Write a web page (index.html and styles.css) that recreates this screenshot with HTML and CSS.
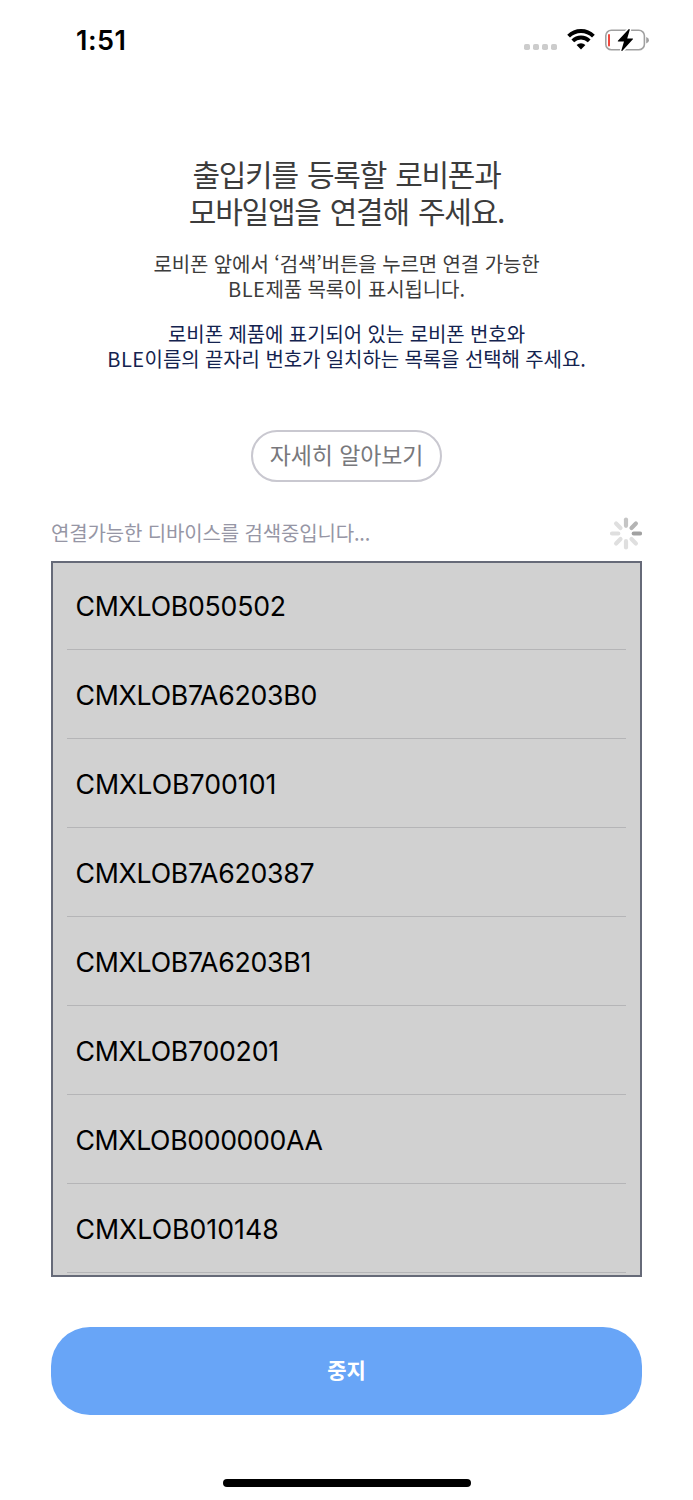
FILE: index.html
```html
<!DOCTYPE html>
<html lang="ko">
<head>
<meta charset="utf-8">
<title>로비폰 연결</title>
<link rel="stylesheet" href="styles.css">
</head>
<body>
<div class="screen">
  <header class="status">
    <span class="time">1:51</span>
    <div class="indicators">
      <div class="signal"><i></i><i></i><i></i><i></i></div>
      <svg class="wifi" width="28" height="21" viewBox="0 0 28 21" fill="none" stroke="#000" stroke-width="3.9">
        <path d="M1.6 7.1 A17.6 17.6 0 0 1 26.4 7.1"/>
        <path d="M5.8 11.9 A11.6 11.6 0 0 1 22.2 11.9"/>
        <path d="M14 20.4 L9.6 16 A6.4 6.4 0 0 1 18.4 16 Z" fill="#000" stroke="none"/>
      </svg>
      <svg class="battery" width="46" height="24" viewBox="0 0 46 24">
        <rect x="1.8" y="2.2" width="38.6" height="19.6" rx="5.6" fill="none" stroke="#a0a0a0" stroke-width="1.6"/>
        <path d="M42.2 8.9 Q45 9.8 45 12.2 Q45 14.6 42.2 15.5 Z" fill="#a0a0a0"/>
        <rect x="4" y="6" width="2" height="12.6" rx="1" fill="#f0483e"/>
        <path d="M24.6 1.2 L13.9 12.8 Q13.4 13.6 14.2 13.6 H20 L17.4 22.2 Q17.3 23.6 18.4 22.8 L28.9 11.3 Q29.4 10.4 28.5 10.4 H23.2 L25.7 2 Q25.8 .6 24.6 1.2 Z" fill="#000" stroke="#fff" stroke-width="3" paint-order="stroke"/>
      </svg>
    </div>
  </header>

  <main class="content">
    <h1 class="title">출입키를 등록할 로비폰과<br>모바일앱을 연결해 주세요.</h1>
    <p class="guide">로비폰 앞에서 ‘검색’버튼을 누르면 연결 가능한<br><span class="latin">BLE</span>제품 목록이 표시됩니다.</p>
    <p class="guide notice">로비폰 제품에 표기되어 있는 로비폰 번호와<br><span class="latin">BLE</span>이름의 끝자리 번호가 일치하는 목록을 선택해 주세요.</p>
    <button class="more"><span>자세히 알아보기</span></button>

    <div class="searching">
      <span class="search-text">연결가능한 디바이스를 검색중입니다...</span>
      <svg class="spinner" width="34" height="34" viewBox="-18 -16.5 34 34" stroke-width="4.2" stroke-linecap="round">
        <path d="M0 -7.7V-14" stroke="#c5c5c5"/>
        <path d="M5.5 -5.5L9.9 -9.9" stroke="#b4b4b4"/>
        <path d="M7.7 0H14" stroke="#a1a1a1"/>
        <path d="M5.5 5.5L9.9 9.9M0 7.7V14M-5.5 5.5L-9.9 9.9M-7.7 0H-14M-5.5 -5.5L-9.9 -9.9" stroke="#dfdfdf"/>
      </svg>
    </div>

    <ul class="devices">
      <li>CMXLOB050502</li>
      <li>CMXLOB7A6203B0</li>
      <li class="loose">CMXLOB700101</li>
      <li>CMXLOB7A620387</li>
      <li>CMXLOB7A6203B1</li>
      <li>CMXLOB700201</li>
      <li class="tight">CMXLOB000000AA</li>
      <li class="loose">CMXLOB010148</li>
    </ul>
    <button class="stop"><span>중지</span></button>
  </main>
  <div class="home-bar"></div>
</div>
</body>
</html>
```
FILE: styles.css
```css
* { box-sizing: border-box; }
body { margin: 0; background: #fff; }
.screen {
  width: 693px;
  height: 1500px;
  display: flex;
  flex-direction: column;
  align-items: center;
  overflow: hidden;
  font-family: Inter, "Noto Sans CJK KR", sans-serif;
}
.status {
  width: 100%;
  height: 80px;
  padding: 0 43.5px 1px 76px;
  display: flex;
  align-items: center;
  justify-content: space-between;
}
.time { padding-top: 1px; font-size: 27px; font-weight: 600; letter-spacing: .5px; }
.indicators { display: flex; align-items: center; }
.signal { display: flex; gap: 2.8px; padding-top: 14px; margin-right: 10px; }
.signal i { width: 6px; height: 6px; border-radius: 1.8px; background: #ccc; }
.wifi { margin-right: 9px; }

.content {
  width: 591px;
  display: flex;
  flex-direction: column;
  align-items: center;
}
.title, .guide {
  margin: 0;
  text-align: center;
  white-space: nowrap;
  font-family: "Noto Sans CJK KR", sans-serif;
  font-weight: 400;
  color: #3c3c3c;
}
.title { margin-top: 75px; font-size: 30px; line-height: 37px; letter-spacing: -1.25px; word-spacing: 2px; }
.guide { margin-top: 22px; font-size: 20px; line-height: 25px; letter-spacing: -.1px; }
.notice { margin-top: 20px; color: #14234f; }
.latin { letter-spacing: .5px; }
.more {
  width: 191px;
  height: 52px;
  margin-top: 59px;
  padding: 0 0 4px;
  border: 2px solid #c9c8d0;
  border-radius: 26px;
  background: #fff;
  color: #78787c;
  font: 400 23px "Noto Sans CJK KR", sans-serif;
  letter-spacing: -.15px;
}
.searching {
  width: 100%;
  height: 34px;
  margin-top: 35px;
  display: flex;
  align-items: center;
  justify-content: space-between;
}
.search-text {
  padding-bottom: 2px;
  font: 400 20px/32px "Noto Sans CJK KR", sans-serif;
  letter-spacing: -.15px;
  color: #9696a5;
}
.devices {
  width: 100%;
  height: 716px;
  margin: 10px 0 0;
  padding: 0 14px;
  border: 2px solid #666a78;
  background: #d1d1d1;
  list-style: none;
  overflow: hidden;
}
.devices li {
  height: 89px;
  padding-left: 8.5px;
  border-bottom: 1px solid #b5b5b7;
  font-size: 26.7px;
  line-height: 90px;
  letter-spacing: -.25px;
  color: #000;
}
.devices li:first-child { height: 87px; line-height: 86px; }
.devices .loose { letter-spacing: 0; }
.devices .tight { letter-spacing: -.38px; }
.stop {
  width: 100%;
  height: 88px;
  margin-top: 49.5px;
  padding: 0 0 4px;
  border: 0;
  border-radius: 39px;
  background: #68a5f7;
  color: #fff;
  font: 700 21px "Noto Sans CJK KR", sans-serif;
}
.home-bar {
  width: 248px;
  height: 8px;
  margin-top: 64px;
  border-radius: 4px;
  background: #000;
}
```
